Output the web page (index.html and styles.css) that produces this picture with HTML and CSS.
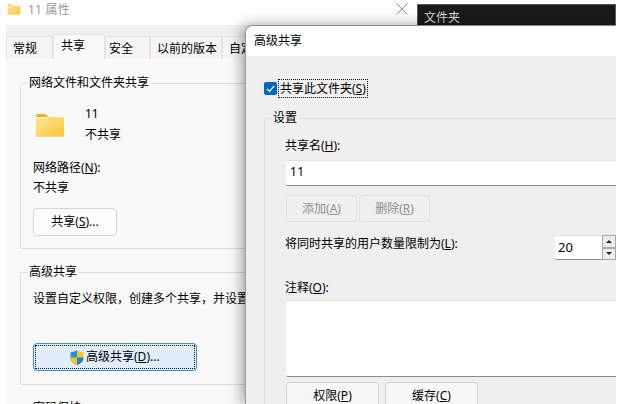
FILE: index.html
```html
<!DOCTYPE html>
<html lang="zh-CN">
<head>
<meta charset="utf-8">
<title>11 属性</title>
<link rel="stylesheet" href="styles.css">
</head>
<body>
<svg class="defs" width="0" height="0" aria-hidden="true">
  <defs>
    <linearGradient id="fg" x1="0" y1="0" x2="1" y2="1">
      <stop offset="0" stop-color="#ffe596"/>
      <stop offset="1" stop-color="#fcc73a"/>
    </linearGradient>
    <symbol id="folder" viewBox="0 0 28 24">
      <path d="M0 3a2 2 0 0 1 2-2h7l4 3H0z" fill="#f2b01c"/>
      <path d="M0 4h26a2 2 0 0 1 2 2v16a1 1 0 0 1-1 1H1a1 1 0 0 1-1-1z" fill="url(#fg)"/>
      <path d="M0 4h12l-2 1.600H0z" fill="#fff6d8"/>
      <path d="M0 23h28v1H0z" fill="#e8d9a8"/>
    </symbol>
  </defs>
</svg>

<section class="props">
  <header class="props-title">
    <svg class="title-folder"><use href="#folder"/></svg>
    <span class="props-name">11 属性</span>
    <svg class="close" viewBox="0 0 12 12"><path d="M.5.5l11 11M11.500.5l-11 11" stroke="#8c8c8c" fill="none"/></svg>
  </header>
  <nav class="tabs">
    <span class="tab tab-general">常规</span>
    <span class="tab tab-active">共享</span>
    <span class="tab tab-security">安全</span>
    <span class="tab tab-versions">以前的版本</span>
    <span class="tab tab-custom">自定义</span>
  </nav>
  <div class="props-body">
    <fieldset class="group group-net">
      <legend>网络文件和文件夹共享</legend>
      <div class="share-item">
        <svg class="big-folder"><use href="#folder"/></svg>
        <div class="share-info">
          <div class="share-name">11</div>
          <div class="share-state">不共享</div>
        </div>
      </div>
      <div class="path-label">网络路径(<u>N</u>):</div>
      <div class="path-value">不共享</div>
      <button class="btn btn-share">共享(<u>S</u>)...</button>
    </fieldset>
    <fieldset class="group group-adv">
      <legend>高级共享</legend>
      <p class="adv-desc">设置自定义权限，创建多个共享，并设置其他高级共享选项。</p>
      <button class="btn btn-adv">
        <span class="btn-adv-inner">
          <svg class="shield" viewBox="0 0 14 15">
            <path d="M7 0C5 1.500 3 2 .5 2.200V8c0 3.200 2.600 5.600 6.500 7z" fill="#1f93e0"/>
            <path d="M7 0c2 1.500 4 2 6.500 2.200V8c0 3.200-2.600 5.600-6.500 7z" fill="#f7c325"/>
            <path d="M.5 7.500H7V15C3.100 13.600.5 11.200.5 8z" fill="#f7c325"/>
            <path d="M7 7.500h6.500V8c0 3.200-2.600 5.600-6.500 7z" fill="#1f7fd0"/>
          </svg>
          <span>高级共享(<u>D</u>)...</span>
        </span>
      </button>
    </fieldset>
    <div class="next-legend">密码保护</div>
  </div>
</section>

<div class="dark-tab">文件夹</div>

<section class="dialog">
  <header class="dialog-title">高级共享</header>
  <div class="dialog-body">
    <label class="share-check">
      <span class="checkbox"><svg viewBox="0 0 13 13"><path d="M3 6.800l2.500 2.500L10.200 4" stroke="#fff" stroke-width="1.200" fill="none"/></svg></span>
      <span class="check-label">共享此文件夹(<u>S</u>)</span>
    </label>
    <fieldset class="group group-settings">
      <legend>设置</legend>
      <div class="field-label">共享名(<u>H</u>):</div>
      <div class="input name-input">11</div>
      <div class="btn-row">
        <button class="btn btn-disabled">添加(<u>A</u>)</button>
        <button class="btn btn-disabled">删除(<u>R</u>)</button>
      </div>
      <div class="limit-row">
        <span class="limit-label">将同时共享的用户数量限制为(<u>L</u>):</span>
        <div class="spin">
          <div class="input spin-input">20</div>
          <div class="spin-btns">
            <span class="spin-btn"><i class="arrow-up"></i></span>
            <span class="spin-btn"><i class="arrow-down"></i></span>
          </div>
        </div>
      </div>
      <div class="field-label comment-label">注释(<u>O</u>):</div>
      <div class="input comment"></div>
      <div class="btn-row bottom-row">
        <button class="btn btn-wide">权限(<u>P</u>)</button>
        <button class="btn btn-wide">缓存(<u>C</u>)</button>
      </div>
    </fieldset>
  </div>
</section>
</body>
</html>
```
FILE: styles.css
```css
* { box-sizing: border-box; }
html, body { margin: 0; height: 100%; background: #fff; overflow: hidden; }
body {
  position: relative;
  font: 12px/16px "Noto Sans", "Noto Sans CJK SC", sans-serif;
  color: #000;
}
.defs { position: absolute; }
u { text-underline-offset: 1px; }

.props {
  position: absolute;
  left: 0; top: 0;
  width: 417px; height: 404px;
  display: flex;
  flex-direction: column;
  overflow: hidden;
}
.props-title {
  height: 25px;
  flex: none;
  display: flex;
  align-items: flex-start;
  padding: 4px 9px 0 7px;
  color: #9a9a9a;
}
.title-folder { width: 14px; height: 11px; flex: none; }
.props-name { margin-left: 7px; line-height: 12px; font-size: 12px; letter-spacing: .2px; }
.close { width: 12px; height: 12px; margin-left: auto; flex: none; margin-top: -1px; }

.tabs {
  margin-left: 6px;
  height: 34px;
  flex: none;
  background: #f0f0f0;
  display: flex;
  align-items: flex-end;
}
.tab {
  height: 23px;
  background: #f5f5f5;
  border: 1px solid #e3e3e3;
  border-bottom: 0;
  border-radius: 2px 2px 0 0;
  display: flex;
  align-items: center;
  padding: 1px 0 0 6px;
  flex: none;
  white-space: nowrap;
}
.tab-general { width: 47px; }
.tab-active { width: 52px; height: 25px; background: #f9f9f9; padding: 0 0 3px 7px; }
.tab-security { width: 45px; padding-left: 3px; }
.tab-versions { width: 72px; }
.tab-custom { width: 60px; }

.props-body {
  margin-left: 6px;
  flex: 1;
  background: #f9f9f9;
  padding: 16px 0 0 14px;
}
.group {
  margin: 0;
  padding: 0;
  border: 1px solid #dcdcdc;
  border-radius: 2px;
  min-width: 0;
}
.group legend { padding: 0 2px; margin-left: -6px; line-height: 16px; }
.group-net { width: 600px; height: 174px; padding: 0 0 0 12px; }
.share-item { display: flex; height: 57px; padding: 21px 0 0 3px; }
.big-folder { width: 28px; height: 24px; flex: none; margin-top: 1px; }
.share-info { margin: -8px 0 0 21px; }
.share-name { height: 23px; line-height: 20px; }
.path-label { margin-top: 12px; }
.path-value { margin-top: 4px; }
.btn {
  display: block;
  font: inherit;
  color: inherit;
  background: #fdfdfd;
  border: 1px solid #d3d3d3;
  border-radius: 4px;
  padding: 0;
}
.btn-share { width: 84px; height: 28px; margin-top: 12px; }

.group-adv { width: 600px; height: 121px; margin-top: 15px; padding: 0 0 0 12px; }
.adv-desc { margin: 11px 0 0; white-space: nowrap; }
.btn-adv {
  width: 164px; height: 28px; margin-top: 36px;
  background: #e1eefa;
  border: 1px solid #3b8fd6;
  padding: 1px;
}
.btn-adv-inner {
  display: flex;
  align-items: center;
  padding-left: 34px;
  height: 100%;
  border: 1px dotted #111;
  white-space: nowrap;
}
.shield { width: 14px; height: 15px; margin-right: 2px; flex: none; }
.next-legend { margin: 15px 0 0 13px; }

.dark-tab {
  position: absolute;
  left: 417px; top: 4px;
  width: 199px; height: 22px;
  background: #1a1a1a;
  border: 1px solid #5a5a5a;
  border-bottom: 0;
  color: #d8d8d8;
  padding: 5px 0 0 6px;
  overflow: hidden;
}

.dialog {
  position: absolute;
  left: 245px; top: 25px;
  width: 371px; height: 379px;
  background: #efefef;
  border-top: 1px solid #8a8a8a;
  border-left: 1px solid #9a9a9a;
  border-radius: 8px 0 0 0;
  box-shadow: -3px 0 14px rgba(0,0,0,.38);
  clip-path: inset(-30px 0 0 -30px);
  overflow: hidden;
}
.dialog-title {
  height: 30px;
  background: #fff;
  padding: 7px 0 0 8px;
}
.dialog-body { padding: 23px 0 0 18px; }
.share-check { display: flex; align-items: center; height: 19px; }
.checkbox {
  width: 13px; height: 13px;
  background: #0067c0;
  border-radius: 2px;
  flex: none;
  display: block;
}
.checkbox svg { display: block; width: 13px; height: 13px; }
.check-label {
  margin-left: 1px;
  border: 1px dotted #111;
  height: 19px;
  width: 90px;
  line-height: 17px;
  padding-left: 1px;
  white-space: nowrap;
}
.group-settings {
  width: 400px;
  margin-top: 12px;
  height: 300px;
  padding: 0 0 0 20px;
  border-color: #dedede;
}
.group-settings legend { margin-left: -14px; }
.field-label { margin-top: 12px; height: 16px; }
.input {
  background: #fff;
  border-top: 1px solid #e2e2e2;
  border-bottom: 1px solid #8a8a8a;
  border-radius: 2px 0 0 2px;
  padding-left: 4px;
}
.name-input { margin: 6px 0 0 1px; height: 26px; line-height: 22px; letter-spacing: .5px; }
.btn-row { display: flex; gap: 2px; margin: 9px 0 0 1px; }
.btn-disabled {
  width: 71px; height: 27px;
  background: #f0f0f0;
  border-color: #e0e0e0;
  color: #8f8f8f;
}
.limit-row { display: flex; margin-top: 13px; height: 25px; }
.limit-label { width: 270px; flex: none; margin-top: 1px; }
.spin { display: flex; height: 25px; flex: none; }
.spin-input { width: 47px; height: 25px; line-height: 23px; padding-left: 3px; font-size: 13px; }
.spin-btns { width: 14px; display: flex; flex-direction: column; flex: none; }
.spin-btn {
  height: 12.500px;
  background: #ececec;
  border: 1px solid #a8a8a8;
  display: flex;
  align-items: center;
  justify-content: center;
}
.arrow-up, .arrow-down { width: 0; height: 0; border: 3px solid transparent; }
.arrow-up { border-bottom-color: #222; border-top: 0; }
.arrow-down { border-top-color: #222; border-bottom: 0; }
.comment-label { margin-top: 20px; }
.comment { margin: 4px 0 0 1px; height: 77px; }
.bottom-row { gap: 6px; margin-top: 5px; }
.btn-wide { width: 93px; height: 28px; background: #f7f7f7; }
```
